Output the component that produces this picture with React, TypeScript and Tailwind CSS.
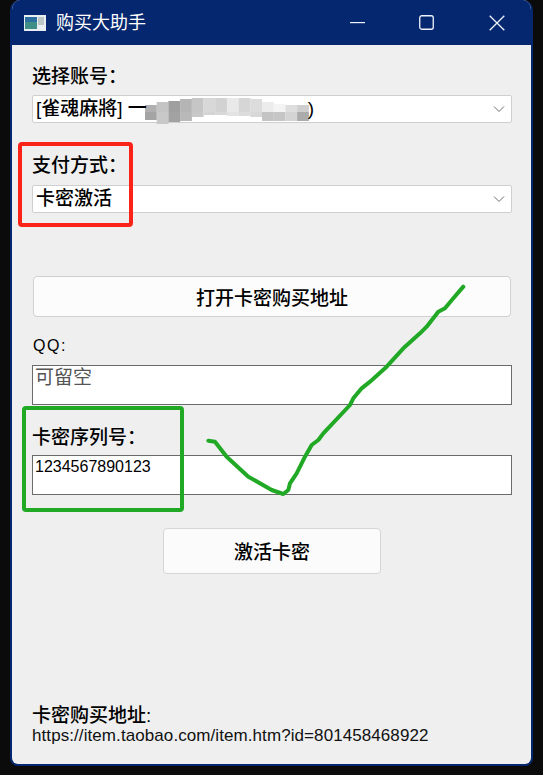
const cjk = "font-['Liberation_Sans','Noto_Sans_CJK_SC',sans-serif]";

function Chevron() {
  return (
    <svg width="12" height="8" viewBox="0 0 12 8" className="shrink-0">
      <path d="M1 1.5 L6 6.5 L11 1.5" fill="none" stroke="#6f6f6f" strokeWidth="1" />
    </svg>
  );
}

function Combo({ text, children }: { text: string; children?: React.ReactNode }) {
  return (
    <div className="flex h-[28px] items-center justify-between rounded-[2px] border border-[#cfcfcf] bg-white pl-[3px] pr-[6px]">
      <span className="relative z-10 text-[19px] font-medium leading-[26px] text-black">
        {text}
        {children}
      </span>
      <Chevron />
    </div>
  );
}

const mosaicTop = ["#b0b0b0", "#c4c4c4", "#9f9f9f", "#b5b5b5", "#c6c6c6", "#d8d8d8", "#d2d2d2", "#e9e9e9", "#d6d6d6", "#dcdcdc", "#ececec", "#f4f4f4", "#dedede", "#cfcfcf"];
const mosaicBottom = ["#a4a4a4", "#c8c8c8", "#a2a2a2", "#b9b9b9", "#c8c8c8", "#d4d4d4", "#d8d8d8", "#e3e3e3", "#dcdcdc", "#d8d8d8", "#c4c4c4", "#c6c6c6", "#d4d4d4", "#ababab"];
const topY = [11, 8, 7, 5, 4, 4, 4, 4, 4, 5, 8, 10, 11, 11];
const botH = [8, 12, 10, 9, 5, 3, 3, 4, 4, 5, 9, 9, 9, 9];

function Mosaic() {
  return (
    <svg width="164" height="30" viewBox="0 0 164 30" className="absolute left-[145px] top-[94px]">
      {mosaicTop.map((c, i) => (
        <g key={i}>
          <rect x={i * 11.7} y={topY[i]} width="11.8" height={18 - topY[i]} fill={c} />
          <rect x={i * 11.7} y="18" width="11.8" height={botH[i]} fill={mosaicBottom[i]} />
        </g>
      ))}
    </svg>
  );
}

function Field({ text, color }: { text: string; color: string }) {
  return <div className={`h-[40px] border border-[#6b6b6b] bg-white pl-[2px] pt-px ${color}`}>{text}</div>;
}

export default function App() {
  return (
    <div className={`relative h-[775px] w-[543px] overflow-hidden bg-[#0b0b0b] pl-[10px] ${cjk}`}>
      <div className="flex h-[766px] w-[523px] flex-col overflow-hidden rounded-t-[10px] rounded-b-[8px] border-x-2 border-b-2 border-[#05276f] bg-[#efefef]">
        <div className="flex h-[45px] shrink-0 items-center bg-[#05276f] pl-[12px] text-white">
          <svg width="22" height="16" viewBox="0 0 22 16" className="shrink-0">
            <rect width="22" height="16" fill="#e8eef2" />
            <rect x="1" y="2" width="12" height="12" fill="#3f8f86" />
            <rect x="1" y="2" width="12" height="5" fill="#2b6fa0" />
            <rect x="14" y="2" width="6" height="8" fill="#bcc6c4" />
          </svg>
          <span className="ml-[10px] w-[90px] shrink-0 text-[18px] font-normal leading-[24px] text-white">购买大助手</span>
          <svg width="15" height="2" viewBox="0 0 15 2" className="ml-[204px] shrink-0">
            <rect width="15" height="1.2" fill="#f0f3fa" />
          </svg>
          <svg width="15" height="15" viewBox="0 0 15 15" className="ml-[54px] shrink-0">
            <rect x="0.75" y="0.75" width="13.5" height="13.5" rx="2" fill="none" stroke="#f0f3fa" strokeWidth="1.3" />
          </svg>
          <svg width="16" height="16" viewBox="0 0 16 16" className="ml-[55px] shrink-0">
            <path d="M0.7 0.7 L15.3 15.3 M15.3 0.7 L0.7 15.3" fill="none" stroke="#f0f3fa" strokeWidth="1.3" />
          </svg>
        </div>

        <div className="flex flex-1 flex-col pl-[20px] pr-[19px] text-black">
          <div className="mt-[20px] text-[19px] font-medium leading-[24px]">选择账号：</div>
          <div className="mt-[6px]">
            <Combo text="[雀魂麻將] 一">
              <span className="ml-[161px]">)</span>
            </Combo>
          </div>

          <div className="mt-[31px] text-[19px] font-medium leading-[24px]">支付方式：</div>
          <div className="mt-[7px]">
            <Combo text="卡密激活" />
          </div>

          <button className="mx-px mt-[63px] h-[41px] rounded-[4px] border border-[#d0d0d0] bg-[#fcfcfc] pt-[3px] text-[19px] font-medium leading-none text-black">
            打开卡密购买地址
          </button>

          <div className="ml-px mt-[18px] text-[16px] font-medium leading-[22px] tracking-[1.5px]">QQ:</div>
          <div className="mt-[8px]">
            <Field text="可留空" color="text-[19px] leading-[22px] text-[#555555]" />
          </div>

          <div className="mt-[21px] text-[19px] font-medium leading-[24px]">卡密序列号：</div>
          <div className="mt-[5px]">
            <Field text="1234567890123" color="text-[16px] leading-[20px] text-black" />
          </div>

          <button className="ml-[131px] mt-[33px] h-[46px] w-[218px] rounded-[4px] border border-[#d6d6d6] bg-[#fbfbfb] pt-[2px] text-[19px] font-medium leading-none text-black">
            激活卡密
          </button>

          <div className="mt-auto mb-[18px]">
            <div className="text-[19px] font-medium leading-[20px]">卡密购买地址:</div>
            <div className="text-[17px] leading-[20px] tracking-[0.08px] text-[#111111]">https://item.taobao.com/item.htm?id=801458468922</div>
          </div>
        </div>
      </div>

      <Mosaic />

      <div className="absolute left-[18px] top-[142px] h-[85px] w-[115px] rounded-[4px] border-[4px] border-[#fb2318]" />
      <div className="absolute left-[22px] top-[406px] h-[106px] w-[162px] rounded-[4px] border-[4px] border-[#21a926]" />

      <svg width="340" height="240" viewBox="0 0 1020 720" className="absolute left-[190px] top-[270px]">
        <path
          d="M55 512 L75 515 L110 560 L175 620 L245 660 L280 672 L295 660 L300 640 L320 610 L345 560 L365 525 L385 510 L400 490 L480 405 L490 385 L515 355 L540 335 L590 290 L640 235 L690 190 L710 170 L745 125 L765 115 L790 85 L820 50"
          fill="none"
          stroke="#21a926"
          strokeWidth="12"
          strokeLinejoin="round"
          strokeLinecap="round"
        />
      </svg>
    </div>
  );
}
